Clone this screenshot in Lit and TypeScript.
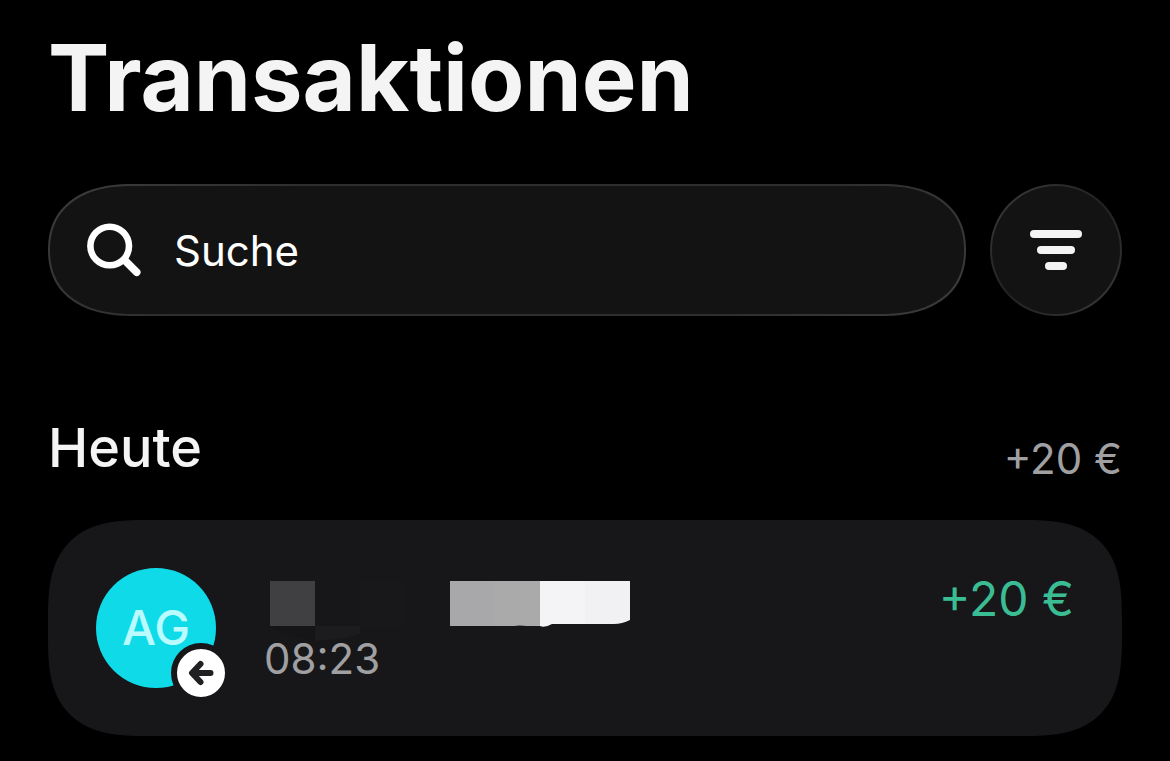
import { LitElement, html, css, svg } from "lit";
import { customElement, property } from "lit/decorators.js";

const searchIcon = svg`
  <circle cx="23.7" cy="23" r="19.3" fill="none" stroke="#fff" stroke-width="6.6"></circle>
  <path d="M39 37.5 L50.7 49.2" fill="none" stroke="#fff" stroke-width="7.6" stroke-linecap="round"></path>`;

@customElement("transaction-row")
class TransactionRow extends LitElement {
  @property() initials = "";
  @property() time = "";
  @property() amount = "";

  static styles = css`
    :host {
      display: flex;
      align-items: flex-start;
      gap: 48px;
    }
    .avatar {
      position: relative;
      flex: none;
      display: flex;
      align-items: center;
      justify-content: center;
      width: 120px;
      height: 120px;
      border-radius: 50%;
      background: #0fdae8;
      color: #b9fbff;
      font-size: 48px;
      font-weight: 500;
      line-height: 62px;
    }
    .badge {
      position: absolute;
      right: -15px;
      bottom: -15px;
      box-sizing: border-box;
      width: 60px;
      height: 60px;
      border: 6px solid #17171a;
      border-radius: 50%;
      background: #fff;
    }
    .badge svg {
      display: block;
    }
    .details {
      flex: 1;
      min-width: 0;
      align-self: center;
    }
    .name {
      display: block;
      height: 62px;
    }
    .time {
      display: block;
      color: #a0a0a3;
      font-size: 42px;
      line-height: 48px;
    }
    .amount {
      color: #3bbd93;
      font-size: 48px;
      line-height: 62px;
      white-space: nowrap;
    }
  `;

  render() {
    return html`
      <div class="avatar">
        <span>${this.initials}</span>
        <span class="badge">
          <svg width="48" height="48" viewBox="0 0 48 48" aria-hidden="true">
            <path d="M33.500 24H16M23.500 15L15 24L23.500 33" fill="none" stroke="#202022"
              stroke-width="6" stroke-linecap="round" stroke-linejoin="round"></path>
          </svg>
        </span>
      </div>
      <div class="details">
        <svg class="name" width="366" height="62" viewBox="0 -1 366 62" overflow="visible" aria-hidden="true">
          <rect x="6" y="7" width="45" height="45" fill="#404042"></rect>
          <path d="M6 52H51V67Q28 64 6 52Z" fill="#151517"></path>
          <path d="M51 52H96V60Q76 66 51 67Z" fill="#1c1c1e"></path>
          <rect x="96" y="7" width="45" height="45" fill="#18181a"></rect>
          <rect x="186" y="7" width="45" height="45" fill="#a8a8aa"></rect>
          <path d="M231 7H276V52H263Q255 51 250 52H231Z" fill="#aaaaaa"></path>
          <path d="M276 7H321V50L288 50Q281 54 276 52Z" fill="#f4f4f6"></path>
          <path d="M321 7H366V46Q358 50 350 50L321 50Z" fill="#f1f1f3"></path>
        </svg>
        <span class="time">${this.time}</span>
      </div>
      <span class="amount">${this.amount}</span>
    `;
  }
}

@customElement("app-root")
class AppRoot extends LitElement {
  static styles = css`
    :host {
      display: block;
      box-sizing: border-box;
      min-height: 100vh;
      padding: 20px 48px 24px;
      background: #000;
      color: #f4f4f4;
      font-family: Inter, "Liberation Sans", sans-serif;
    }
    h1,
    h2 {
      margin: 0;
    }
    h1 {
      font-size: 92px;
      font-weight: 700;
      line-height: 116px;
    }
    .tools {
      display: flex;
      gap: 24px;
      margin-top: 48px;
    }
    .search,
    .filter {
      box-sizing: border-box;
      height: 132px;
      border: 2px solid transparent;
      background:
        linear-gradient(#131313, #131313) padding-box,
        linear-gradient(135deg, #404040, #2c2c2c 25%, #222222 50%, #2c2c2c 75%, #404040) border-box;
    }
    .search {
      flex: 1;
      min-width: 0;
      display: flex;
      align-items: center;
      gap: 32px;
      padding: 2px 36px 0;
      border-radius: 66px;
      background:
        linear-gradient(#131313, #131313) padding-box,
        linear-gradient(135deg, #3c3c3c, #2e2e2e 25%, #2e2e2e 75%, #3c3c3c) border-box;
    }
    .search svg,
    .filter svg {
      flex: none;
      display: block;
    }
    input {
      flex: 1;
      min-width: 0;
      padding: 0;
      border: 0;
      outline: 0;
      background: none;
      color: #fff;
      font: 400 42px/60px Inter, "Liberation Sans", sans-serif;
    }
    input::placeholder {
      color: #fff;
      opacity: 1;
    }
    .filter {
      flex: none;
      display: flex;
      align-items: center;
      justify-content: center;
      width: 132px;
      padding: 0;
      border-radius: 50%;
    }
    .day {
      display: flex;
      align-items: flex-end;
      justify-content: space-between;
      margin: 96px 0 36px;
    }
    h2 {
      font-size: 54px;
      font-weight: 500;
      line-height: 72px;
    }
    .total {
      color: #a0a0a3;
      font-size: 42px;
      line-height: 50px;
    }
    .card {
      padding: 48px;
      border-radius: 72px;
      background: #17171a;
    }
    @supports (corner-shape: superellipse(1.4)) {
      .search {
        border-radius: 84px / 66px;
        corner-shape: superellipse(1.2);
      }
      .card {
        border-radius: 100px;
        corner-shape: superellipse(1.5);
      }
    }
  `;

  render() {
    return html`
      <h1>Transaktionen</h1>
      <div class="tools">
        <label class="search">
          <svg width="56" height="56" viewBox="0 0 56 56" aria-hidden="true">${searchIcon}</svg>
          <input type="search" placeholder="Suche" aria-label="Suche" />
        </label>
        <button class="filter" type="button" aria-label="Filter">
          <svg width="54" height="40" viewBox="0 0 54 40" aria-hidden="true" fill="#f4f4f4">
            <rect x="1" y="0" width="52" height="8" rx="4"></rect>
            <rect x="8" y="16" width="38" height="8" rx="4"></rect>
            <rect x="16" y="32" width="22" height="8" rx="4"></rect>
          </svg>
        </button>
      </div>
      <section>
        <div class="day">
          <h2>Heute</h2>
          <span class="total">+20 €</span>
        </div>
        <div class="card">
          <transaction-row initials="AG" time="08:23" amount="+20 €"></transaction-row>
        </div>
      </section>
    `;
  }
}
